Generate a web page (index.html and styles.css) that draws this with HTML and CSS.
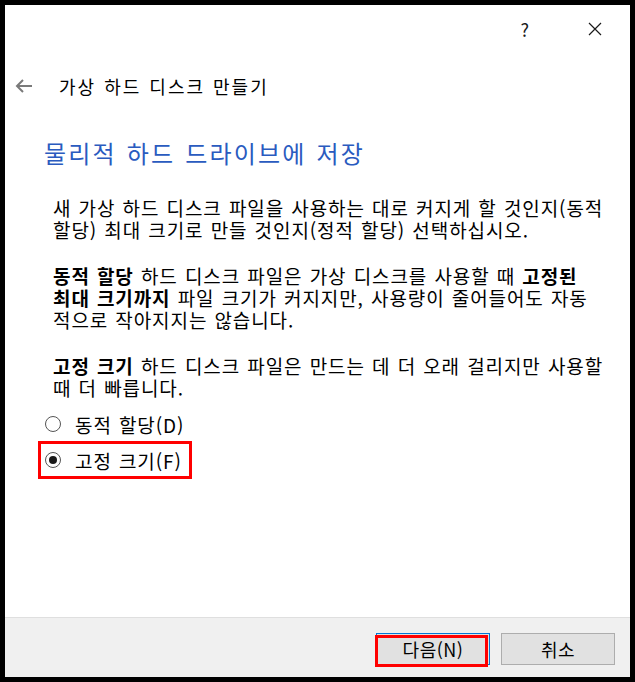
FILE: index.html
```html
<!DOCTYPE html>
<html lang="ko">

<head>
  <meta charset="UTF-8">
  <meta name="viewport" content="width=device-width, initial-scale=1.0">
  <title>가상 하드 디스크 만들기</title>
  <link rel="stylesheet" href="styles.css">
</head>

<body>

  <div class="window">
    <div class="titlebar">
      <span class="help">?</span>
      <svg class="close" width="16" height="16" viewBox="0 0 16 16">
        <path d="M2 2 L14 14 M14 2 L2 14" stroke="#1a1a1a" stroke-width="1.2" fill="none" />
      </svg>
    </div>

    <div class="header">
      <svg class="back" width="18" height="14" viewBox="0 0 18 14">
        <path d="M17 7 H2 M8 1 L2 7 L8 13" stroke="#7a7a7a" stroke-width="2" fill="none" />
      </svg>
      <span class="title">가상 하드 디스크 만들기</span>
    </div>

    <div class="content">
      <h1 class="heading">물리적 하드 드라이브에 저장</h1>

      <p class="text">새 가상 하드 디스크 파일을 사용하는 대로 커지게 할 것인지(동적<br>할당) 최대 크기로 만들 것인지(정적 할당) 선택하십시오.</p>

      <p class="text"><b>동적 할당</b> 하드 디스크 파일은 가상 디스크를 사용할 때 <b>고정된</b><br><b>최대 크기까지</b> 파일 크기가 커지지만, 사용량이 줄어들어도 자동<br>적으로 작아지지는 않습니다.</p>

      <p class="text"><b>고정 크기</b> 하드 디스크 파일은 만드는 데 더 오래 걸리지만 사용할<br>때 더 빠릅니다.</p>

      <div class="options">
        <div class="option">
          <span class="radio"></span>
          <span>동적 할당(D)</span>
        </div>
        <div class="option marked">
          <span class="radio checked"></span>
          <span>고정 크기(F)</span>
        </div>
      </div>
    </div>

    <div class="footer">
      <button class="btn primary">다음(N)</button>
      <button class="btn">취소</button>
    </div>
  </div>

</body>

</html>
```

FILE: styles.css
```css
body {
  margin: 0;
  font-family: 'Noto Sans CJK KR', 'DejaVu Sans', sans-serif;
  color: #000;
}

.window {
  width: 635px;
  height: 682px;
  box-sizing: border-box;
  border: 5px solid #000;
  background: #fff;
  display: flex;
  flex-direction: column;
}

.titlebar {
  height: 48px;
  display: flex;
  justify-content: flex-end;
  align-items: center;
  gap: 58px;
  padding-right: 27px;
}

.help {
  font-size: 18px;
  color: #1a1a1a;
  line-height: 20px;
}

.header {
  margin-top: 19px;
  height: 28px;
  display: flex;
  align-items: center;
  padding-left: 10px;
}

.back {
  margin-right: 26px;
}

.title {
  font-size: 18px;
  letter-spacing: 2px;
  word-spacing: 1px;
}

.content {
  padding-left: 39px;
}

.heading {
  margin: 38px 0 0;
  font-size: 24px;
  font-weight: normal;
  line-height: 30px;
  color: #2a5bbf;
  letter-spacing: 2.2px;
  word-spacing: 1px;
}

.text {
  margin: 24px 0 0 9px;
  font-size: 19px;
  line-height: 22px;
  letter-spacing: 0.9px;
  word-spacing: 1px;
  white-space: nowrap;
}

.content .text:first-of-type {
  margin-top: 29px;
}

.text b {
  font-weight: bold;
}

.options {
  margin-top: 9px;
  margin-left: -3px;
  display: flex;
  flex-direction: column;
  gap: 4px;
}

.option {
  width: 148px;
  height: 32px;
  box-sizing: border-box;
  padding-left: 4px;
  display: flex;
  align-items: center;
  gap: 14px;
  font-size: 19px;
  letter-spacing: 0.9px;
  word-spacing: 1px;
}

.marked {
  outline: 3px solid #f00;
}

.radio {
  width: 16px;
  height: 16px;
  flex: none;
  box-sizing: border-box;
  border: 1.5px solid #555;
  border-radius: 50%;
  display: flex;
  align-items: center;
  justify-content: center;
}

.radio.checked::before {
  content: '';
  width: 8px;
  height: 8px;
  border-radius: 50%;
  background: #1a1a1a;
}

.footer {
  margin-top: auto;
  height: 60px;
  box-sizing: border-box;
  border-top: 1px solid #dfdfdf;
  background: #f0f0f0;
  padding: 15px 15px 0;
  display: flex;
  justify-content: flex-end;
  align-items: flex-start;
  gap: 11px;
}

.btn {
  width: 114px;
  height: 32px;
  border: 1px solid #adadad;
  background: #e1e1e1;
  font-family: 'Noto Sans CJK KR', sans-serif;
  font-size: 18px;
  color: #000;
  padding: 0;
  letter-spacing: 0.5px;
}

.btn.primary {
  position: relative;
  border-color: #0078d7;
}

.btn.primary::after {
  content: '';
  position: absolute;
  left: -2px;
  top: 1px;
  right: 1px;
  bottom: -3px;
  border: 3px solid #f00;
}
```
